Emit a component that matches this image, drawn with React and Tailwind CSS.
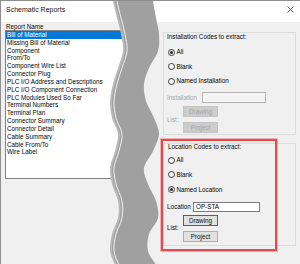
import React from 'react';

const reports = [
  'Bill of Material',
  'Missing Bill of Material',
  'Component',
  'From/To',
  'Component Wire List',
  'Connector Plug',
  'PLC I/O Address and Descriptions',
  'PLC I/O Component Connection',
  'PLC Modules Used So Far',
  'Terminal Numbers',
  'Terminal Plan',
  'Connector Summary',
  'Connector Detail',
  'Cable Summary',
  'Cable From/To',
  'Wire Label',
];

// edges of the grey "cut" band, traced from the picture
const leftEdge = [
  [113, -8], [113, 0], [117, 17], [121, 33], [123, 50], [118, 67], [113, 83], [110, 100],
  [112, 117], [118, 133], [115, 150], [110, 167], [112, 183], [118, 200], [118, 217],
  [112, 233], [110, 250], [115, 264], [118, 272],
];
const rightEdge = [
  [151, -8], [152, 0], [155, 17], [158, 33], [157, 50], [148, 67], [143, 83], [145, 100],
  [153, 117], [158, 133], [152, 150], [143, 167], [147, 183], [155, 200], [157, 217],
  [148, 233], [147, 250], [155, 264], [158, 272],
];

function curve(pts) {
  let d = '';
  for (let i = 0; i < pts.length - 1; i++) {
    const p0 = pts[i - 1] || pts[i];
    const p1 = pts[i];
    const p2 = pts[i + 1];
    const p3 = pts[i + 2] || p2;
    const c1 = [p1[0] + (p2[0] - p0[0]) / 6, p1[1] + (p2[1] - p0[1]) / 6];
    const c2 = [p2[0] - (p3[0] - p1[0]) / 6, p2[1] - (p3[1] - p1[1]) / 6];
    d += ` C${c1[0]},${c1[1]} ${c2[0]},${c2[1]} ${p2[0]},${p2[1]}`;
  }
  return d;
}

function Wave() {
  const rev = [...rightEdge].reverse();
  const band = `M${leftEdge[0][0]},${leftEdge[0][1]}${curve(leftEdge)} L${rev[0][0]},${rev[0][1]}${curve(rev)} Z`;
  const shifted = leftEdge.map(([x, y]) => [x + 3, y]);
  const hl = `M${shifted[0][0]},${shifted[0][1]}${curve(shifted)}`;
  const rim = `M${leftEdge[0][0]},${leftEdge[0][1]}${curve(leftEdge)}`;
  return (
    <svg className="absolute left-0 top-0 pointer-events-none" width="300" height="264" viewBox="0 0 300 264">
      <path d={band} fill="#a0a0a0" />
      <path d={rim} fill="none" stroke="#bababa" strokeWidth="2" />
      <path d={hl} fill="none" stroke="#f2f2f2" strokeWidth="1" />
    </svg>
  );
}

function Radio({ checked, label }) {
  return (
    <div className="flex items-center h-[8px] pl-[4px] gap-[1.5px]">
      <span className="w-[7px] h-[7px] rounded-full border border-[#333] bg-white flex items-center justify-center">
        {checked && <span className="w-[3px] h-[3px] rounded-full bg-[#222]" />}
      </span>
      <span className="leading-[8px]">{label}</span>
    </div>
  );
}

function Button({ children, disabled, focused }) {
  const tone = disabled
    ? 'bg-[#cccccc] border-[#c4c4c4] text-[#a3a3a3]'
    : focused
      ? 'bg-[#e1e1e1] border-[#0078d7] text-[#111]'
      : 'bg-[#e1e1e1] border-[#adadad] text-[#111]';
  return (
    <div className={`w-[35px] h-[11px] border flex items-center justify-center leading-[9px] ${tone}`}>
      {children}
    </div>
  );
}

function ListRow({ disabled, children }) {
  return (
    <div className={`flex items-center mt-[3px] ${disabled ? 'text-[#a3a3a3]' : ''}`}>
      <span className="w-[19px] pl-[3px] leading-[8px]">List:</span>
      <div className="flex flex-col gap-[5px]">{children}</div>
    </div>
  );
}

export default function App() {
  return (
    <div
      className="relative w-[300px] h-[264px] overflow-hidden border-t border-l border-[#8e8e8e] bg-[#f0f0f0] flex flex-col text-[6.3px] text-[#050505]"
      style={{ fontFamily: '"Liberation Sans", Arial, sans-serif' }}
    >
      <div className="h-[21px] bg-white flex items-start justify-between pl-[5px] pr-[6px] pt-[4px] shrink-0">
        <span className="text-[7px] leading-[10px] text-[#111]">Schematic Reports</span>
        <svg className="mt-[1px]" width="7" height="7" viewBox="0 0 7 7">
          <path d="M0.5 0.5 L6.5 6.5 M6.5 0.5 L0.5 6.5" stroke="#444" strokeWidth="0.9" fill="none" />
        </svg>
      </div>

      <div className="flex flex-1">
        <div className="w-[131px] pl-[4px] pt-[1px]">
          <div className="ml-[1px] h-[7px] leading-[7px]">Report Name</div>
          <div className="w-[128px] h-[149px] border border-[#828282] bg-white">
            {reports.map((r, i) => (
              <div
                key={r}
                className={`h-[7.84px] leading-[7.84px] pl-[1px] whitespace-nowrap ${i === 0 ? 'bg-[#0078d7] text-white' : ''}`}
              >
                {r}
              </div>
            ))}
          </div>
        </div>

        <div className="ml-[31px] w-[133px] pt-[10px] flex flex-col">
          <div className="h-[103px] border border-[#dcdcdc] flex flex-col">
            <div className="h-[8px] leading-[8px] pl-[3px]">Installation Codes to extract:</div>
            <div className="mt-[7px]"><Radio checked label="All" /></div>
            <div className="mt-[6.5px]"><Radio label="Blank" /></div>
            <div className="mt-[6.5px]"><Radio label="Named Installation" /></div>
            <div className="mt-[7px] flex items-center h-[11px] pl-[3px] text-[#a8a8a8]">
              <span className="w-[35px] leading-[8px]">Installation</span>
              <div className="w-[64px] h-[11px] border border-[#b4b4b4] bg-[#f4f4f4]" />
            </div>
            <ListRow disabled>
              <Button disabled>Drawing</Button>
              <Button disabled>Project</Button>
            </ListRow>
          </div>

          <div className="relative mt-[8px] h-[103px] border border-[#dcdcdc] flex flex-col">
            <div className="-mt-[1px] h-[7px] leading-[7px] pl-[4px]">Location Codes to extract:</div>
            <div className="mt-[6px]"><Radio label="All" /></div>
            <div className="mt-[6.5px]"><Radio label="Blank" /></div>
            <div className="mt-[7px]"><Radio checked label="Named Location" /></div>
            <div className="mt-[8px] flex items-center h-[10px] pl-[3px]">
              <span className="w-[26px] leading-[8px]">Location</span>
              <div className="w-[67px] h-[10px] border border-[#7a7a7a] bg-white pl-[2px] leading-[8px]">OP-STA</div>
            </div>
            <ListRow>
              <Button focused>Drawing</Button>
              <Button>Project</Button>
            </ListRow>
            <div className="absolute -left-[3px] -top-[5px] w-[116px] h-[112px] border-2 border-[#e9474e] shadow-[0_0_0_1px_rgba(233,71,78,0.35)]" />
          </div>
        </div>
      </div>

      <Wave />
    </div>
  );
}
